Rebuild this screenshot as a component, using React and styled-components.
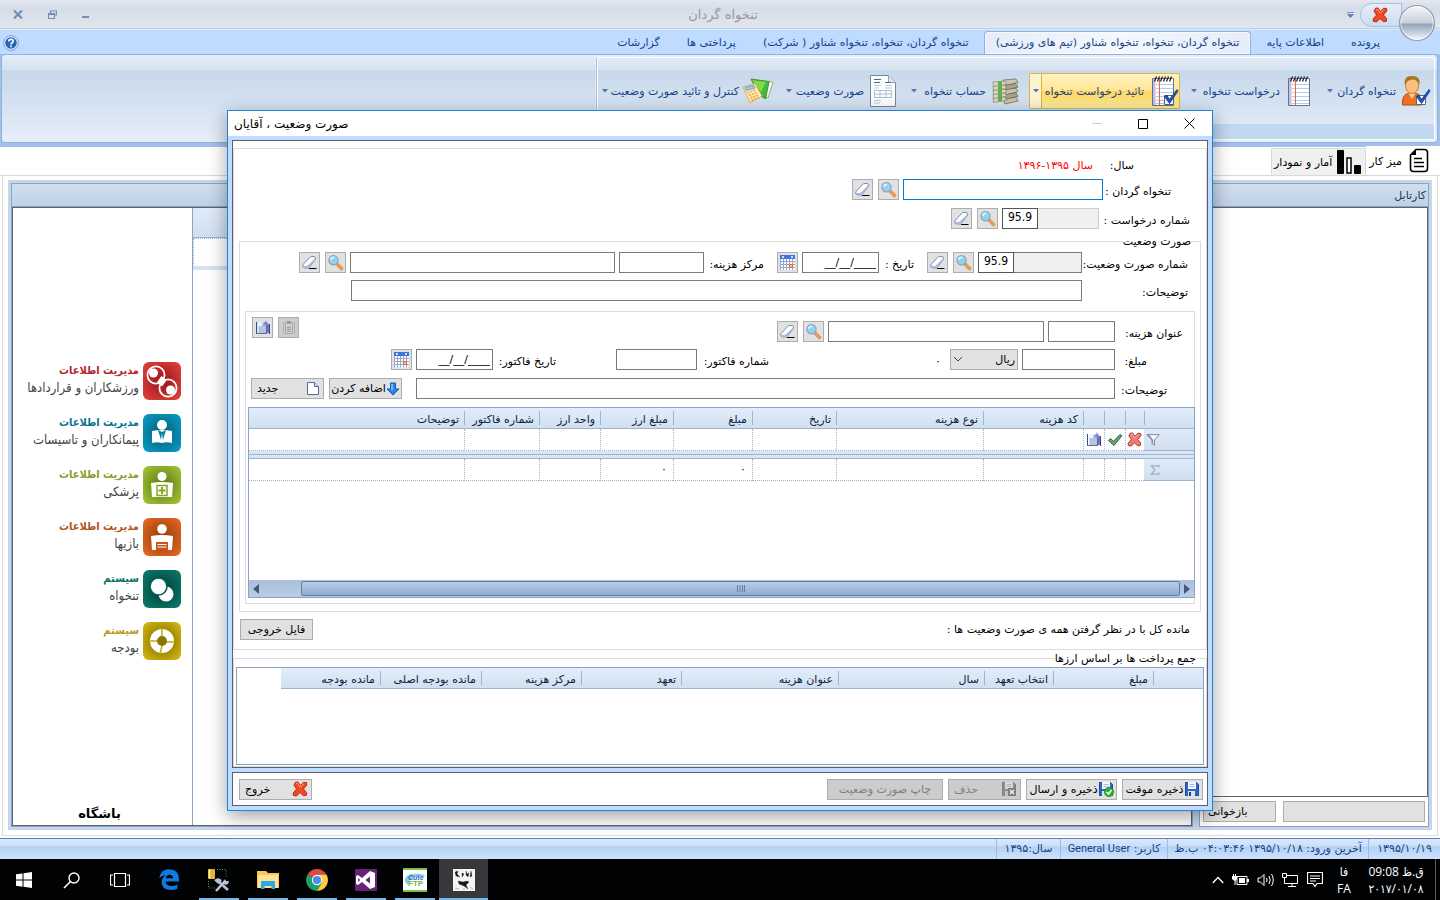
import React from "react";
import styled, { createGlobalStyle, css } from "styled-components";

const Global = createGlobalStyle`
  * { box-sizing: border-box; }
  html, body, #root { height: 100%; }
  body { margin: 0; overflow: hidden; background: #fff; }
  body, button, input, select { font-family: "DejaVu Sans", sans-serif; font-size: 11px; color: #000; }
  button { cursor: default; white-space: nowrap; }
  svg { display: block; flex: none; }
  a { text-decoration: none; color: inherit; }
`;

/* ---------- icons ---------- */

const RedX = ({ size = 16, fill = "#f04a24", stroke = "#b92c10" }) => (
  <svg width={size} height={size} viewBox="0 0 16 16">
    <path d="M3.5 1.2 6 1 8.4 4.6 11.6 1.2 14.6 1.6 14.8 4 11.4 8 14.6 11.6 14.4 14.2 11.4 14.8 8 11.4 4.6 15 1.4 14.4 1.2 12 4.6 8 2 4.2Z" fill={fill} stroke={stroke} strokeLinejoin="round" />
    <path d="M4 2.6 5.6 2.4 8 6 12 2.8" fill="none" stroke="#fff" strokeOpacity=".45" />
  </svg>
);

const MagnifierIcon = () => (
  <svg width="17" height="17" viewBox="0 0 17 17">
    <path d="m10 10 4.500 4.500" stroke="#a8a29a" strokeWidth="3.600" strokeLinecap="round" />
    <path d="m11 11 3.500 3.500" stroke="#f79a3c" strokeWidth="2.600" strokeLinecap="round" />
    <circle cx="6.500" cy="6.200" r="4.600" fill="#8fd3f4" stroke="#8fa3b3" strokeWidth="1.200" />
    <path d="M3.8 5.8a2.8 2.8 0 0 1 3.4-2.4" stroke="#e8f9ff" strokeWidth="1.600" fill="none" />
  </svg>
);

const EraserIcon = () => (
  <svg width="17" height="17" viewBox="0 0 17 17">
    <path d="M1.600 11 8.500 3.600Q9.500 2.500 11 2.500h2q2 .4 1.600 2.300l-.4.9L8.600 13q-.8 1-2 1H4q-2.600-.2-2.400-3Z" fill="#fbfdff" stroke="#7a8cb0" />
    <path d="M2.200 11.400q1.600 1 3.600.6l1.200-.8L14 4.500l.2 1.200L8.600 13q-.8 1-2 1H4q-1.800-.4-1.800-2.600Z" fill="#a8bbdc" />
    <path d="M8 14.500h7.500" stroke="#000" />
  </svg>
);

const CalendarIcon = () => (
  <svg width="17" height="17" viewBox="0 0 17 17" shapeRendering="crispEdges">
    <path d="M1 5h15v11H1z" fill="#fff" />
    <path d="M1 1h15v4H1z" fill="#3f73e0" />
    <path d="M3 2h2v2H3zM12 2h2v2h-2z" fill="#cfe0ff" />
    <path d="M1.5 5v11M4.5 5v11M7.5 5v11M10.5 5v11M13.5 5v11M1 7.500h15M1 10.500h15M1 13.500h15" stroke="#8fa9cf" />
    <path d="M10 10h4v4h-4z" fill="#e8683a" />
    <path d="M11 11h2v2h-2z" fill="#ffb58e" />
  </svg>
);

const CopyIcon = () => (
  <svg width="17" height="17" viewBox="0 0 17 17">
    <path d="M10 3.500h3l2 2.500v8h-5z" fill="#7d6bc4" />
    <path d="M11.500 1v5h3.500" fill="#9a7bdc" />
    <path d="M4 3.500h4.500L12 7v7H4z" fill="#f0f4fb" />
    <path d="M4.500 7H12v7H4.500z" fill="#b4c3e2" />
    <path d="M2.500 3v12M15.500 5v10" stroke="#30508c" fill="none" />
    <path d="M2 14.500h10M12.500 7v8" stroke="#5a6ba0" fill="none" />
    <path d="M8.500 3v4H12z" fill="#7db4dc" />
  </svg>
);

const PasteIcon = () => (
  <svg width="17" height="17" viewBox="0 0 17 17">
    <path d="M3.500 3v12M14.500 3v12" stroke="#b2b2b2" />
    <path d="M5.500 3.500h7v11h-7z" fill="#d4d4d4" stroke="#a5a5a5" />
    <path d="M7 2h4v3H7z" fill="#999" />
    <path d="M7 7h4v6H7z" fill="#bfbfbf" />
    <path d="M7 8.500h4M7 10.500h4M7 12.500h3" stroke="#a3a3a3" />
  </svg>
);

const DownArrowIcon = () => (
  <svg width="14" height="14" viewBox="0 0 14 14">
    <path d="M4.500 1h5v6H13L7 13 1 7h3.500z" fill="#2a86ea" stroke="#1559b0" strokeLinejoin="round" />
    <path d="M6 2v6" stroke="#8cc8ff" strokeWidth="1.500" />
  </svg>
);

const PageIcon = () => (
  <svg width="14" height="15" viewBox="0 0 14 15">
    <path d="M1.500 1.500h7l4 4v8h-11z" fill="#fff" stroke="#4a6c9e" />
    <path d="M8.500 1.500v4h4" fill="#d4e2f5" stroke="#4a6c9e" />
  </svg>
);

const SaveIcon = ({ badge, grey }) => (
  <svg width="16" height="16" viewBox="0 0 16 16">
    <path d="M1.500 1.500h11l2 2v11h-13z" fill={grey ? "#8d8d8d" : "#2f66c0"} stroke={grey ? "#7b7b7b" : "#1c4a9a"} />
    <path d="M4 1h8v7H4z" fill={grey ? "#d9d9d9" : "#f4f8ff"} />
    <path d="M5.500 3.500h5M5.500 5.500h5" stroke={grey ? "#b5b5b5" : "#a9bddf"} />
    <path d="M4 10h7v5H4z" fill={grey ? "#c2c2c2" : "#dde5f2"} />
    {!badge && <path d="M5 11h2v4H5z" fill="#1c418a" />}
    {badge === "ok" && (
      <g><circle cx="11" cy="11" r="4.700" fill="#2fae35" stroke="#16801f" strokeWidth=".6" /><path d="m8.500 11 2 2 3-4" stroke="#fff" strokeWidth="1.600" fill="none" /></g>
    )}
    {badge === "x" && (
      <g><path d="M7 7h8v8H7z" fill="#7d7d7d" /><path d="m9 9 4 4M13 9l-4 4" stroke="#eee" strokeWidth="1.600" /></g>
    )}
  </svg>
);

const CheckIcon = () => (
  <svg width="16" height="16" viewBox="0 0 16 16">
    <path d="m1.500 8.500 2-2 3 2.800L13 2.500l1.800 1.300L7 13.500Z" fill="#6aa869" stroke="#2f5f3a" strokeLinejoin="round" />
  </svg>
);

const FunnelIcon = () => (
  <svg width="14" height="12" viewBox="0 0 14 12">
    <path d="M.8.6h12.400L8.500 6v5.400l-2.600-2V6Z" fill="#f4f7fb" stroke="#8792a3" strokeLinejoin="round" />
    <path d="M1 .6 6 6v3l1.200 1V6L3 .6Z" fill="#7f8998" />
  </svg>
);

const SigmaIcon = () => (
  <svg width="10" height="10" viewBox="0 0 10 10">
    <path d="M9 2.500V.8H1L5 5 1 9.200h8V7.500" fill="none" stroke="#9dacc2" strokeWidth="1.200" />
  </svg>
);

const blueCheck = (
  <g>
    <path d="M17.500 20.500h9v9h-9z" fill="#fff" stroke="#5d6675" />
    <path d="m17.500 21.500 2.500-1 2.500 4 7.500-10 1 1.500-8.500 12.500Z" fill="#1b55c4" stroke="#0c3290" strokeWidth=".8" strokeLinejoin="round" />
  </g>
);

const UserCheckIcon = () => (
  <svg width="32" height="32" viewBox="0 0 32 32">
    <path d="M3.500 30q-1-11 7-12h5q7 1 7 6v6z" fill="#ea7424" stroke="#b44c0c" />
    <path d="m9.500 18 3.500 6 3.500-6z" fill="#ffd3a0" />
    <ellipse cx="13" cy="10.500" rx="6.500" ry="8" fill="#f9c07e" stroke="#c07e2c" />
    <path d="M6 10.500Q4 1 13 1t7.500 9q-1.500-5.500-7-5.500T6 10.500Z" fill="#a8761a" />
    {blueCheck}
  </svg>
);

const Notepad = ({ check }) => (
  <svg width="32" height="32" viewBox="0 0 32 32">
    <path d="M5.500 3.500h21v27h-21z" fill="#fff" stroke="#6a6f92" />
    <path d="M6 4h2.500v26H6z" fill="#c3c3e0" />
    <path d="M9 9.500h17M9 13.500h17M9 17.500h17M9 21.500h17M9 25.500h17M9 28.500h17" stroke="#b4caf0" />
    <path d="M12.500 4v26" stroke="#f0603f" />
    <path d="m7.500 6.500 2-5M10.500 6.500l2-5M13.500 6.500l2-5M16.500 6.500l2-5M19.500 6.500l2-5M22.500 6.500l2-5" stroke="#26262c" strokeWidth="1.300" />
    {check && blueCheck}
  </svg>
);

const MoneyIcon = () => (
  <svg width="32" height="32" viewBox="0 0 32 32">
    {[4, 3, 2, 1, 0].map((i) => (
      <path key={i} d={`M14 ${5 + i * 4.600} 27 ${4 + i * 4.600}l2 3.600-13 3z`} fill={i % 2 ? "#a8a38a" : "#c9c4ab"} stroke="#55523f" strokeWidth=".6" />
    ))}
    {[4, 3, 2, 1, 0].map((i) => (
      <g key={i}>
        <path d={`M4 ${7 + i * 4} 16 ${6 + i * 4}l1.500 3.400-13 2z`} fill="#d9d7c4" stroke="#77755f" strokeWidth=".6" />
        <path d={`m9 ${6.600 + i * 4} 4-.4v4l-4 .6z`} fill="#5cb445" />
      </g>
    ))}
  </svg>
);

const FormIcon = () => (
  <svg width="32" height="32" viewBox="0 0 32 32">
    <path d="M3.500 .5h18l7 7v24h-25z" fill="#fdfeff" stroke="#71889f" />
    <path d="M21.500 .5v7h7" fill="#dfe9f3" stroke="#8fa5ba" />
    <path d="M7 4.500h7M7 7.500h6M18 7.500h6" stroke="#59636d" />
    <path d="M7 10.500h7M18 10.500h7M7 13h5M18 13h7M7 25.500h7M7 28h6" stroke="#b7c8d8" />
    <path d="M7.500 15.500h17v7h-17zM7.500 19h17M13 15.500v7M19 15.500v7" fill="none" stroke="#a9c0d6" />
  </svg>
);

const BookCalcIcon = () => (
  <svg width="32" height="32" viewBox="0 0 32 32">
    <path d="m27 6 4 1.500L26 23l-2.500-1z" fill="#f3f6ea" stroke="#7aa85a" strokeWidth=".8" />
    <path d="m9 4 18 2.500L23.500 24 17 20z" fill="#46b83c" stroke="#2a8a2a" strokeWidth=".8" />
    <path d="m10 5 14 2-5 10z" fill="#8fe04d" opacity=".8" />
    <path d="m1 12 12-3.500L20 21 8 28z" fill="#ffe9b4" stroke="#d9a44a" strokeWidth=".8" />
    <path d="m3 12.500 8.500-2.500 1.500 3-9 2.500z" fill="#8ccbef" stroke="#5a93bf" strokeWidth=".7" />
    <path d="m5.500 18 8-3.200M7 20.500l8-3.200M8.500 23l8-3.200M9.500 25.500l8-3.400" stroke="#eba945" strokeWidth="1.500" strokeDasharray="2 1" />
  </svg>
);

const DocumentLinesIcon = () => (
  <svg width="20" height="26" viewBox="0 0 20 26">
    <path d="M7 1.500h8.500a3 3 0 0 1 3 3v16a3 3 0 0 1-3 3h-11a3 3 0 0 1-3-3V7z" fill="#fff" stroke="#000" strokeWidth="1.600" />
    <path d="M7 1.500V7H1.500z" fill="#000" />
    <path d="M5 10.500h8M5 14.500h10M5 18.500h10" stroke="#000" strokeWidth="1.400" />
  </svg>
);

const BarsIcon = () => (
  <svg width="26" height="26" viewBox="0 0 26 26">
    <rect x="1" y="1" width="7" height="24" rx="1" />
    <rect x="11" y="9" width="4" height="15" fill="#fff" stroke="#000" strokeWidth="1.500" />
    <rect x="18" y="16" width="7" height="9" rx="1" />
  </svg>
);

const HelpIcon = () => (
  <svg width="16" height="16" viewBox="0 0 16 16">
    <circle cx="8" cy="8" r="7.400" fill="#dcebfb" stroke="#7fa0cc" />
    <circle cx="8" cy="8" r="5.800" fill="#2566b8" />
    <path d="M5.800 6.400q0-2 2.200-2t2.200 1.800q0 1-1.200 1.600Q8 8.400 8 9.400M8 10.600v1.600" stroke="#fff" strokeWidth="1.600" fill="none" />
  </svg>
);

const OrbIcon = () => (
  <svg width="38" height="38" viewBox="0 0 38 38">
    <defs>
      <linearGradient id="orb" x2="0" y2="1">
        <stop offset="0" stopColor="#f4f6f9" /><stop offset=".5" stopColor="#c9cfda" />
        <stop offset=".53" stopColor="#93a1b8" /><stop offset="1" stopColor="#f6faff" />
      </linearGradient>
    </defs>
    <circle cx="19" cy="19" r="17.500" fill="url(#orb)" stroke="#8e9db5" strokeWidth="1.200" />
    <circle cx="19" cy="19" r="16.300" fill="none" stroke="#fff" strokeOpacity=".6" />
  </svg>
);

const moduleArt = {
  ball: (
    <g fill="#fff">
      <circle cx="10.500" cy="11" r="4.500" /><circle cx="27.500" cy="28" r="4.500" />
      <path d="m18.500 14 5 4.500-4.500 6-5-4.500z" />
      <circle cx="13" cy="13" r="8.600" fill="none" stroke="#fff" strokeWidth="1.800" />
      <circle cx="25" cy="26" r="8.600" fill="none" stroke="#fff" strokeWidth="1.800" />
    </g>
  ),
  tie: (
    <g fill="#fff">
      <circle cx="19" cy="11" r="5" /><path d="M9 17q10-2 20 0l0 12q-5-1.500-10 0-5-1.500-10 0z" />
      <path d="m15 16 3 10 1-7 1 7 3-10-4 2z" fill="#0a7fa3" />
    </g>
  ),
  medic: (
    <g fill="#fff">
      <circle cx="19" cy="10.500" r="4.600" /><path d="M8 17q11-2 22 0l-1 14H9z" />
      <path d="M14 19.500h10v10H14z" fill="none" stroke="#86a61f" strokeWidth="1.500" /><path d="M19 21v7M15.500 24.500h7" stroke="#86a61f" strokeWidth="2" />
    </g>
  ),
  desk: (
    <g fill="#fff">
      <circle cx="19" cy="11" r="4.800" /><path d="M8 18q11-2 22 0l-1 14H9z" />
      <path d="M13 24h12v8H13z" fill="#c85518" /><path d="M14.500 26.500h9M14.500 29h9" stroke="#fff" strokeWidth="1.200" />
    </g>
  ),
  coins: (
    <g fill="#fff"><circle cx="23" cy="24" r="7.500" /><circle cx="15.500" cy="16.500" r="8.500" stroke="#066153" strokeWidth="1.600" /></g>
  ),
  ring: (
    <g>
      <circle cx="19" cy="19" r="8.500" fill="none" stroke="#fff" strokeWidth="7" />
      <path d="M19 6v8M6 19h8M24 20h8M19 24l-2 8" stroke="#c5a90f" strokeWidth="1.500" />
    </g>
  ),
};

const ModuleIcon = ({ kind, from, to }) => (
  <svg width="38" height="38" viewBox="0 0 38 38">
    <defs>
      <radialGradient id={`g-${kind}`} cx=".5" cy=".5" r=".72">
        <stop offset=".2" stopColor={from} /><stop offset="1" stopColor={to} />
      </radialGradient>
    </defs>
    <rect width="38" height="38" rx="6" fill={`url(#g-${kind})`} />
    {moduleArt[kind]}
  </svg>
);

/* ---------- host window ---------- */

const Screen = styled.div`
  position: relative;
  height: 100vh;
  min-width: 1200px;
  display: flex;
  flex-direction: column;
  direction: rtl;
  white-space: nowrap;
`;

const TitleBar = styled.header`
  position: relative;
  height: 30px;
  flex: none;
  display: flex;
  align-items: center;
  background: linear-gradient(#e2e7f0 0, #d6dde8 30%, #e2e6ee 100%);
  border-bottom: 1px solid #dfeaf8;
  box-shadow: inset 0 -1px #bccfe8;
  padding: 0 38px 0 6px;
`;

const AppTitle = styled.h1`
  flex: 1;
  margin: 0;
  padding-left: 10px;
  font-size: 13px;
  font-weight: normal;
  text-align: center;
  color: #9a9a9a;
`;

const Orb = styled.button`
  position: absolute;
  top: 4px;
  right: 4px;
  padding: 0;
  border: 0;
  background: none;
`;

const QuickAccess = styled.div`
  width: 42px;
  height: 24px;
  display: flex;
  align-items: center;
  padding-right: 13px;
  border: 1px solid #a9bfdd;
  border-radius: 12px 0 0 12px;
  background: linear-gradient(#e6edf7, #cddcf0);
`;

const PlainButton = styled.button`
  display: grid;
  place-items: center;
  width: ${(p) => p.$w || 34}px;
  height: 22px;
  padding: 0;
  border: 0;
  background: none;
`;

const WindowControls = styled.div`
  display: flex;
  direction: ltr;
`;

const TabStrip = styled.nav`
  height: 24px;
  flex: none;
  display: flex;
  align-items: flex-end;
  gap: 3px;
  padding: 0 48px 0 3px;
  background: #bfdbff;
`;

const RibbonTab = styled.a`
  height: 23px;
  line-height: 22px;
  padding: 0 11px;
  color: #15428b;
  border: 1px solid transparent;
  border-bottom: 0;
  ${(p) => p.$active && css`
    border-color: #8db2e3;
    border-radius: 4px 4px 0 0;
    background: linear-gradient(90deg, #e6edf8, #f4f8fd 50%, #e6edf8);
    box-shadow: inset 0 0 0 1px #fff8;
  `}
`;

const HelpButton = styled(PlainButton)`
  margin-right: auto;
`;

const Ribbon = styled.div`
  height: 93px;
  flex: none;
  padding: 0 2px 4px 1px;
  background: #a3c0e8;
`;

const RibbonBody = styled.div`
  height: 100%;
  display: flex;
  padding: 2px;
  border: 1px solid #8db2e3;
  border-radius: 4px;
  background: linear-gradient(#e6eef8 0, #d5e2f0 17%, #c7d8ea 18%, #d7e3f2 60%, #e7eff9 100%);
`;

const RibbonGroup = styled.div`
  display: flex;
  flex-direction: column;
  border: 1px solid #fff;
  border-left-color: #a9bfdd;
  border-radius: 3px;
  box-shadow: inset 1px 0 #fff, -1px 0 #fff4;
`;

const RibbonItems = styled.div`
  flex: 1;
  display: flex;
  align-items: center;
  gap: 7px;
  padding: 0 2px;
`;

const GroupCaption = styled.div`
  height: 15px;
  background: #c1d8f0;
`;

const RibbonItem = styled.div`
  width: ${(p) => p.$w}px;
  height: 36px;
  display: flex;
  border: 1px solid transparent;
  border-radius: 2px;
  ${(p) => p.$active && css`
    border-color: #d9b54c;
    background: linear-gradient(#fff3c4 0, #ffe694 48%, #ffd55a 52%, #fff0a0 100%);
  `}
`;

const RibbonMain = styled.button`
  flex: 1;
  display: flex;
  align-items: center;
  gap: 3px;
  padding: 0;
  border: 0;
  background: none;
  color: #15428b;
`;

const RibbonDrop = styled.button`
  width: 12px;
  padding: 0;
  border: 0;
  display: grid;
  place-items: center;
  background: ${(p) => (p.$active ? "#fff3cf" : "none")};
  border-right: 1px solid ${(p) => (p.$active ? "#d9b54c" : "transparent")};
`;

const Caret = () => (
  <svg width="6" height="4" viewBox="0 0 6 4"><path d="M0 0h6L3 3.500z" fill="#4a77b8" /></svg>
);

const PageTabs = styled.nav`
  height: 29px;
  flex: none;
  display: flex;
  align-items: flex-end;
  border-bottom: 1px solid #d9d9d9;
`;

const PageTab = styled.a`
  height: ${(p) => (p.$active ? 29 : 27)}px;
  display: flex;
  align-items: center;
  gap: ${(p) => (p.$active ? 7 : 4)}px;
  padding: 0 ${(p) => (p.$active ? 10 : 3)}px 0 2px;
  background: ${(p) => (p.$active ? "#fff" : "#f0f0f0")};
  border: 1px solid ${(p) => (p.$active ? "transparent" : "#d9d9d9")};
  border-bottom: 0;
`;

const Workspace = styled.main`
  flex: 1;
  min-height: 0;
  display: grid;
  grid-template-columns: 236px 1fr;
  padding: 4px 5px 5px;
  margin: 0 2px 2px;
  border: 1px solid #dcdcdc;
  border-top: 0;
`;

const Pane = styled.section`
  min-height: 0;
  display: flex;
  flex-direction: column;
  border: 3px solid #c6d6ea;
  outline: 1px solid #8aa4c8;
  outline-offset: -4px;
  padding: 1px;
`;

const PaneHeader = styled.h2`
  height: 23px;
  flex: none;
  margin: 0;
  padding: 0 2px;
  font-size: 11px;
  font-weight: normal;
  line-height: 23px;
  color: #1e3250;
  background: linear-gradient(#d0dfee, #bfd1e6);
  border-bottom: 1px solid #8aa4c8;
`;

const PaneBody = styled.div`
  flex: 1;
  min-height: 0;
  display: flex;
  border: 1px solid #5d6270;
  direction: ltr;
`;

const PaneFooter = styled.div`
  height: 29px;
  flex: none;
  display: flex;
  align-items: center;
  gap: 7px;
  padding: 0 3px;
`;

const ModuleList = styled.ul`
  width: 180px;
  margin: 0;
  padding: 154px 11px 4px;
  list-style: none;
  display: flex;
  flex-direction: column;
  gap: 14px;
  direction: rtl;
  border-right: 1px solid #8aa4c8;
`;

const ModuleLink = styled.a`
  height: 38px;
  display: flex;
  gap: 4px;
  font-family: "DejaVu Sans Condensed", "DejaVu Sans", sans-serif;
  font-size: 13px;
  line-height: 17px;
  color: #444;
`;

const ModuleTitle = styled.strong`
  display: block;
  font-size: 11px;
  color: ${(p) => p.$color};
`;

const ClubName = styled.li`
  margin-top: auto;
  padding-right: 6px;
  text-align: center;
  font-size: 13px;
  font-weight: bold;
`;

const BackGrid = styled.div`
  flex: 1;
`;

const BackGridHead = styled.div`
  height: 30px;
  background: linear-gradient(#e0ebf8, #cfdff0);
  border-bottom: 1px solid #9fb4d0;
`;

const BackGridRow = styled.div`
  height: 32px;
  border: 1px dotted #9fb4d0;
  border-bottom: 4px solid #d5e3f3;
`;

const StatusBar = styled.footer`
  height: 21px;
  flex: none;
  display: flex;
  line-height: 20px;
  color: #15428b;
  border-top: 1px solid #5b83bb;
  background: linear-gradient(#dbe8f9 0, #cbdff8 35%, #b3d0f5 40%, #cfe2fa 100%);
`;

const StatusCell = styled.div`
  width: ${(p) => p.$w}px;
  text-align: center;
  border-left: 1px solid #9fbce4;
`;

const LatinName = styled.bdi`
  font-family: Roboto, sans-serif;
`;

/* ---------- taskbar ---------- */

const Taskbar = styled.div`
  height: 41px;
  flex: none;
  display: flex;
  direction: ltr;
  background: #010204;
  color: #fff;
`;

const TaskButton = styled.button`
  width: ${(p) => p.$w || 49}px;
  height: 41px;
  display: grid;
  place-items: center;
  border: 0;
  padding: 0;
  background: ${(p) => (p.$active ? "#37383c" : "none")};
  background-image: ${(p) => (p.$running ? "linear-gradient(#76b9ed, #76b9ed)" : "none")};
  background-size: ${(p) => (p.$active ? "100%" : "40px")} 2px;
  background-position: bottom center;
  background-repeat: no-repeat;
`;

const Tray = styled.div`
  margin-left: auto;
  display: flex;
  align-items: center;
  gap: 8px;
`;

const TrayText = styled.div`
  width: ${(p) => p.$w}px;
  text-align: center;
  direction: rtl;
  font-family: "Open Sans", "DejaVu Sans Condensed", sans-serif;
  font-size: 12px;
  line-height: 17px;
`;

const ShowDesktop = styled.div`
  width: 5px;
  align-self: stretch;
  border-left: 1px solid #5a5a5a;
`;

/* ---------- dialog ---------- */

const Dialog = styled.div`
  position: absolute;
  top: 110px;
  bottom: 89px;
  left: 227px;
  right: 227px;
  display: flex;
  flex-direction: column;
  background: #bfdbff;
  border: 1px solid #1e84dc;
  box-shadow: 0 5px 18px rgba(0, 0, 0, 0.38);
`;

const DialogTitle = styled.header`
  height: 25px;
  flex: none;
  display: flex;
  align-items: center;
  justify-content: space-between;
  padding: 0 0 0 6px;
  background: #fff;
  font-size: 12px;
`;

const DialogControls = styled.div`
  display: flex;
`;

const DialogBody = styled.form`
  flex: 1;
  min-height: 0;
  margin: 0;
  padding: 4px;
  display: flex;
  flex-direction: column;
  gap: 4px;
`;

const Panel = styled.div`
  display: flex;
  flex-direction: column;
  flex: ${(p) => (p.$grow ? 1 : "none")};
  min-height: 0;
  padding-top: ${(p) => (p.$grow ? 7 : 0)}px;
  background: #fff;
  border: 1px solid #5f5f6b;
`;

const Group = styled.div`
  display: flex;
  flex-direction: column;
  flex: 1;
  min-height: 0;
  border: 1px solid #dcdcdc;
  margin: ${(p) => p.$margin || "0"};
  padding: ${(p) => p.$pad || "0"};
`;

const FieldSet = styled.fieldset`
  display: flex;
  flex-direction: column;
  flex: ${(p) => (p.$h ? "none" : 1)};
  height: ${(p) => (p.$h ? p.$h + "px" : "auto")};
  min-width: 0;
  min-height: 0;
  margin: ${(p) => p.$margin || "0"};
  padding: ${(p) => p.$pad || "0"};
  border: 1px solid #dcdcdc;
`;

const Legend = styled.legend`
  height: 16px;
  line-height: 18px;
  margin-right: ${(p) => p.$inset}px;
  padding: 0;
`;

const Row = styled.div`
  min-height: 21px;
  flex: none;
  display: flex;
  align-items: flex-end;
  gap: 4px;
  padding: 0 ${(p) => p.$start || 0}px 0 ${(p) => p.$end || 0}px;
  margin-bottom: ${(p) => p.$after || 0}px;
`;

const Label = styled.label`
  width: ${(p) => p.$w}px;
  line-height: 17px;
  padding-right: ${(p) => p.$indent || 0}px;
  margin-right: ${(p) => p.$lead || 0}px;
`;

const YearValue = styled.output`
  line-height: 17px;
  color: #f00;
`;

const TextBox = styled.input`
  width: ${(p) => (p.$w ? p.$w + "px" : "auto")};
  flex: ${(p) => (p.$w ? "none" : 1)};
  min-width: 0;
  height: 21px;
  padding: 0 2px;
  border: 1px solid #7a7a7a;
  background: #fff;
  outline: 0;
  &:focus { border-color: #0078d7; }
`;

const DateBox = styled(TextBox)`
  direction: ltr;
  text-align: right;
`;

const NumberPair = styled.div`
  width: ${(p) => p.$w}px;
  height: 21px;
  display: flex;
  border: 1px solid ${(p) => (p.$soft ? "#ccc" : "#7a7a7a")};
  background: #f0f0f0;
`;

const NumberPart = styled.input`
  width: ${(p) => (p.$narrow ? "36px" : "auto")};
  flex: ${(p) => (p.$narrow ? "none" : 1)};
  min-width: 0;
  height: 21px;
  margin: -1px 0 -1px ${(p) => (p.$narrow ? -1 : 0)}px;
  padding: 0 0 3px;
  border: ${(p) => (p.$narrow ? "1px solid #555" : "0")};
  background: ${(p) => (p.$narrow ? "#fff" : "transparent")};
  text-align: center;
  font-family: "DejaVu Sans Condensed", sans-serif;
  font-size: 12px;
`;

const Buttons = styled.div`
  display: flex;
  gap: 5px;
`;

const TallTools = styled(Buttons)`
  height: 25px;
  align-items: flex-start;
  margin-right: auto;
`;

const AddButtons = styled(Buttons)`
  margin-right: 10px;
`;

const IconButton = styled.button`
  width: 21px;
  height: 21px;
  display: grid;
  place-items: center;
  padding: 0;
  border: 1px solid #adadad;
  background: ${(p) => (p.disabled ? "#ccc" : "#e1e1e1")};
`;

const PushButton = styled.button`
  width: ${(p) => p.$w}px;
  height: 21px;
  display: flex;
  align-items: center;
  justify-content: ${(p) => (p.$split ? "space-between" : "center")};
  padding: ${(p) => (p.$split ? "0 3px 0 5px" : "0 2px")};
  border: 1px solid #adadad;
  background: ${(p) => (p.disabled ? "#ccc" : "#e1e1e1")};
  color: ${(p) => (p.disabled ? "#808080" : "#000")};
  margin-right: ${(p) => (p.$push ? "auto" : 0)};
`;

const RefreshButton = styled(PushButton)`
  justify-content: flex-end;
  padding-left: 4px;
`;

const Currency = styled.select`
  width: 68px;
  height: 21px;
  padding: 0 2px;
  appearance: none;
  border: 1px solid #adadad;
  background: #e1e1e1 url("data:image/svg+xml,%3Csvg xmlns='http://www.w3.org/2000/svg' width='8' height='5'%3E%3Cpath d='M0 0l4 4 4-4' fill='none' stroke='%23444'/%3E%3C/svg%3E") no-repeat 3px center;
`;

const Amount = styled.output`
  flex: 1;
  padding-right: 5px;
  line-height: 17px;
`;

const GridFrame = styled.div`
  flex: 1;
  min-height: 0;
  display: flex;
  flex-direction: column;
  border: 1px solid #8aa4c8;
  margin: ${(p) => p.$margin || "0"};
`;

const DataTable = styled.table`
  width: 100%;
  table-layout: fixed;
  border-collapse: separate;
  border-spacing: 0;
`;

const HeadCell = styled.th`
  height: 21px;
  padding: 3px 5px 0 0;
  font-weight: normal;
  text-align: right;
  line-height: 17px;
  color: #10203c;
  overflow: hidden;
  border-bottom: 1px solid #9fb4d0;
  background:
    linear-gradient(#9fb4d0, #9fb4d0) no-repeat left 3px / 1px 14px,
    linear-gradient(#e3edf9, #d0e0f0);
  ${(p) => p.$last && css`background: linear-gradient(#e3edf9, #d0e0f0);`}
`;

const BlankHead = styled.th`
  padding: 0;
`;

const Cell = styled.td`
  height: 22px;
  padding: 0 6px 0 0;
  line-height: 20px;
  border-bottom: 1px dotted #9fb4d0;
  border-left: 1px dotted #9fb4d0;
  &:last-child { border-left: 0; }
`;

const IconCell = styled(Cell)`
  padding: 0 2px;
`;

const SelectorCell = styled.th`
  padding: 0 34px 0 0;
  background: linear-gradient(#e0ebf8, #cfdff0);
  border-bottom: 1px solid #9fb4d0;
`;

const Splitter = styled.td`
  height: 8px;
  padding: 0;
  border-bottom: 1px solid #9fb4d0;
  background: linear-gradient(#d9e6f4 3px, #9fb4d0 3px, #9fb4d0 4px, #d9e6f4 4px);
`;

const Scrollbar = styled.div`
  height: 17px;
  margin-top: auto;
  display: flex;
  align-items: center;
  padding: 0 4px;
  background: linear-gradient(#a9bfdc, #bccde5);
`;

const ScrollThumb = styled.div`
  flex: 1;
  height: 15px;
  margin: 0 4px 0 42px;
  display: grid;
  place-items: center;
  border: 1px solid #5f7ea6;
  border-radius: 2px;
  background: linear-gradient(#b9cce4, #92acd0);
`;

const SummaryRow = styled.div`
  height: 37px;
  flex: none;
  display: flex;
  align-items: center;
  padding: 0 16px 2px 6px;
`;

const CommandBar = styled.div`
  height: 32px;
  display: flex;
  align-items: center;
  gap: 5px;
  padding: 0 4px 0 6px;
`;

const LookupButtons = () => (
  <Buttons>
    <IconButton type="button" aria-label="جستجو"><MagnifierIcon /></IconButton>
    <IconButton type="button" aria-label="پاک کردن"><EraserIcon /></IconButton>
  </Buttons>
);

const DateField = ({ id }) => (
  <>
    <DateBox id={id} $w={77} defaultValue="__/__/____" />
    <IconButton type="button" aria-label="تقویم"><CalendarIcon /></IconButton>
  </>
);

const ribbonTabs = [
  "پرونده",
  "اطلاعات پایه",
  "تنخواه گردان، تنخواه، تنخواه شناور  (تیم های ورزشی)",
  "تنخواه گردان، تنخواه، تنخواه شناور ( شرکت)",
  "پرداختی ها",
  "گزارشات",
];

const ribbonItems = [
  { text: "تنخواه گردان", w: 109, icon: <UserCheckIcon /> },
  { text: "درخواست تنخواه", w: 129, icon: <Notepad /> },
  { text: "تائید درخواست تنخواه", w: 151, icon: <Notepad check />, active: true },
  { text: "حساب تنخواه", w: 115, icon: <MoneyIcon /> },
  { text: "صورت وضعیت", w: 118, icon: <FormIcon /> },
  { text: "کنترل و تائید صورت وضعیت", w: 176, icon: <BookCalcIcon /> },
];

const modules = [
  { title: "مدیریت اطلاعات", sub: "ورزشکاران و قراردادها", color: "#b5262a", kind: "ball", from: "#a51d20", to: "#e8463f" },
  { title: "مدیریت اطلاعات", sub: "پیمانکاران و تاسیسات", color: "#0a7590", kind: "tie", from: "#056a86", to: "#0ba0cc" },
  { title: "مدیریت اطلاعات", sub: "پزشکی", color: "#86a02c", kind: "medic", from: "#6b8519", to: "#a8cc3a" },
  { title: "مدیریت اطلاعات", sub: "بازیها", color: "#b5541c", kind: "desk", from: "#a34410", to: "#ee6c24" },
  { title: "سیستم", sub: "تنخواه", color: "#0a7564", kind: "coins", from: "#04493f", to: "#0a8070" },
  { title: "سیستم", sub: "بودجه", color: "#b5a022", kind: "ring", from: "#8a7600", to: "#dcc014" },
];

const costColumns = [
  [50, ""], [19, ""], [21, ""], [21, ""], [100, "کد هزینه"], [147, "نوع هزینه"], [84, "تاریخ"],
  [79, "مبلغ"], [73, "مبلغ ارز"], [61, "واحد ارز"], [75, "شماره فاکتور"], [0, "توضیحات"],
];

const paymentColumns = [
  [50, ""], [100, "مبلغ"], [69, "انتخاب تعهد"], [146, "سال"], [157, "عنوان هزینه"], [100, "تعهد"],
  [100, "مرکز هزینه"], [101, "مانده بودجه اصلی"], [99, "مانده بودجه"],
];

const Columns = ({ list, spare }) => (
  <colgroup>
    {list.map(([w], i) => <col key={i} width={w || undefined} />)}
    {spare && <col />}
  </colgroup>
);

const CostTable = () => (
  <GridFrame $margin="8px -1px 5px 2px">
    <DataTable>
      <Columns list={costColumns} />
      <thead>
        <tr>{costColumns.map(([, t], i) => <HeadCell key={i} $last={i === costColumns.length - 1}>{t}</HeadCell>)}</tr>
      </thead>
      <tbody>
        <tr>
          <SelectorCell><FunnelIcon /></SelectorCell>
          <IconCell><RedX fill="#f47a6e" stroke="#a33" size={15} /></IconCell>
          <IconCell><CheckIcon /></IconCell>
          <IconCell><CopyIcon /></IconCell>
          {costColumns.slice(4).map((c) => <Cell key={c[1]} />)}
        </tr>
        <tr><Splitter colSpan={12} /></tr>
        <tr>
          <SelectorCell><SigmaIcon /></SelectorCell>
          {costColumns.slice(1).map(([, t], i) => (
            <Cell key={i}>{t === "مبلغ" || t === "مبلغ ارز" ? "۰" : ""}</Cell>
          ))}
        </tr>
      </tbody>
    </DataTable>
    <Scrollbar>
      <svg width="6" height="10" viewBox="0 0 6 10"><path d="M0 0l6 5-6 5z" fill="#44587c" /></svg>
      <ScrollThumb>
        <svg width="8" height="7" viewBox="0 0 8 7"><path d="M.5 0v7M3 0v7M5.500 0v7M7.500 0v7" stroke="#5f7ea6" /></svg>
      </ScrollThumb>
      <svg width="6" height="10" viewBox="0 0 6 10"><path d="M6 0 0 5l6 5z" fill="#44587c" /></svg>
    </Scrollbar>
  </GridFrame>
);

const StatementDialog = () => (
  <Dialog role="dialog" aria-label="صورت وضعیت ، آقایان">
    <DialogTitle>
      <DialogControls>
        <PlainButton $w={46} aria-label="بستن">
          <svg width="11" height="11" viewBox="0 0 11 11"><path d="m.5.5 10 10M10.500.5l-10 10" stroke="#000" /></svg>
        </PlainButton>
        <PlainButton $w={46} aria-label="بزرگ">
          <svg width="10" height="10" viewBox="0 0 10 10"><path d="M.5.5h9v9h-9z" fill="none" stroke="#000" /></svg>
        </PlainButton>
        <PlainButton $w={46} aria-label="کوچک">
          <svg width="10" height="1" viewBox="0 0 10 1"><path d="M0 .5h10" stroke="#ccc" /></svg>
        </PlainButton>
      </DialogControls>
      <span>صورت وضعیت ، آقایان</span>
    </DialogTitle>
    <DialogBody onSubmit={(e) => e.preventDefault()}>
      <Panel $grow>
        <Group $pad="4px 0 0">
          <Row $start={72} $after={5}>
            <Label as="span" $w={37}>سال:</Label>
            <YearValue>سال ۱۳۹۵-۱۳۹۶</YearValue>
          </Row>
          <Row $start={35} $after={8}>
            <Label htmlFor="holder" $w={64}>تنخواه گردان :</Label>
            <TextBox id="holder" $w={200} autoFocus />
            <LookupButtons />
          </Row>
          <Row $start={16} $after={4}>
            <Label htmlFor="request" $w={87}>شماره درخواست :</Label>
            <NumberPair $w={97} $soft>
              <NumberPart aria-label="دنباله" readOnly />
              <NumberPart id="request" $narrow defaultValue="95.9" />
            </NumberPair>
            <LookupButtons />
          </Row>
          <FieldSet $margin="0 5px" $pad="3px 0 7px">
            <Legend $inset={9}>صورت وضعیت</Legend>
            <Row $start={12} $end={59} $after={7}>
              <Label htmlFor="statement" $w={102}>شماره صورت وضعیت:</Label>
              <NumberPair $w={104}>
                <NumberPart aria-label="دنباله" readOnly />
                <NumberPart id="statement" $narrow defaultValue="95.9" />
              </NumberPair>
              <LookupButtons />
              <Label htmlFor="date" $w={31} $lead={9}>تاریخ :</Label>
              <DateField id="date" />
              <Label htmlFor="center" $w={56} $lead={9}>مرکز هزینه:</Label>
              <TextBox id="center" $w={85} />
              <TextBox aria-label="نام مرکز هزینه" />
              <LookupButtons />
            </Row>
            <Row $start={12} $end={111} $after={10}>
              <Label htmlFor="note" $w={102}>توضیحات:</Label>
              <TextBox id="note" />
            </Row>
            <Group $margin="0 5px" $pad="5px 0 0">
              <Row $start={11} $end={6} $after={7}>
                <Label htmlFor="cost" $w={64}>عنوان هزینه:</Label>
                <TextBox id="cost" $w={67} />
                <TextBox aria-label="نام هزینه" $w={216} />
                <LookupButtons />
                <TallTools>
                  <IconButton type="button" disabled aria-label="چسباندن"><PasteIcon /></IconButton>
                  <IconButton type="button" aria-label="رونوشت"><CopyIcon /></IconButton>
                </TallTools>
              </Row>
              <Row $start={11} $end={145} $after={8}>
                <Label htmlFor="amount" $w={64} $indent={36}>مبلغ:</Label>
                <TextBox id="amount" $w={93} />
                <Currency aria-label="ارز"><option>ریال</option></Currency>
                <Amount>۰</Amount>
                <Label htmlFor="invoice" $w={68}>شماره فاکتور:</Label>
                <TextBox id="invoice" $w={81} />
                <Label htmlFor="invoiceDate" $w={59} $lead={56}>تاریخ فاکتور:</Label>
                <DateField id="invoiceDate" />
              </Row>
              <Row $start={11} $end={5}>
                <Label htmlFor="costNote" $w={64} $indent={16}>توضیحات:</Label>
                <TextBox id="costNote" />
                <AddButtons>
                  <PushButton type="button" $w={73}><DownArrowIcon />اضافه کردن</PushButton>
                  <PushButton type="button" $w={73} $split><PageIcon />جدید</PushButton>
                </AddButtons>
              </Row>
              <CostTable />
            </Group>
          </FieldSet>
          <SummaryRow>
            <span>مانده کل با در نظر گرفتن همه ی صورت وضعیت ها :</span>
            <PushButton type="button" $w={73} $push>فایل خروجی</PushButton>
          </SummaryRow>
        </Group>
        <FieldSet $h={117} $pad="1px 2px">
          <Legend $inset={8}>جمع پرداخت ها بر اساس ارزها</Legend>
          <GridFrame>
            <DataTable>
              <Columns list={paymentColumns} spare />
              <thead>
                <tr>
                  {paymentColumns.map(([, t], i) => <HeadCell key={i} $last={i === paymentColumns.length - 1}>{t}</HeadCell>)}
                  <BlankHead />
                </tr>
              </thead>
            </DataTable>
          </GridFrame>
        </FieldSet>
      </Panel>
      <Panel>
        <CommandBar>
          <PushButton type="submit" $w={81}><SaveIcon />ذخیره موقت</PushButton>
          <PushButton type="button" $w={91}><SaveIcon badge="ok" />ذخیره و ارسال</PushButton>
          <PushButton type="button" $w={73} $split disabled><SaveIcon badge="x" grey />حذف</PushButton>
          <PushButton type="button" $w={116} disabled>چاپ صورت وضعیت</PushButton>
          <PushButton type="button" $w={73} $split $push><RedX />خروج</PushButton>
        </CommandBar>
      </Panel>
    </DialogBody>
  </Dialog>
);

const tasks = [
  { name: "Start", w: 48, art: <svg width="16" height="16" viewBox="0 0 16 16"><path d="M0 2.300 6.500 1.400v6.200H0zM7.500 1.200 16 0v7.600H7.500zM0 8.500h6.500v6.200L0 13.800zM7.500 8.500H16V16l-8.500-1.200z" fill="#fff" /></svg> },
  { name: "Search", w: 48, art: <svg width="18" height="18" viewBox="0 0 18 18"><circle cx="11" cy="7" r="5" fill="none" stroke="#fff" strokeWidth="1.400" /><path d="M7.500 10.500 1 17" stroke="#fff" strokeWidth="1.600" /></svg> },
  { name: "Task view", w: 48, art: <svg width="20" height="14" viewBox="0 0 20 14"><path d="M4.500.5h11v13h-11zM3 2H.5v10H3M17 2h2.500v10H17" fill="none" stroke="#fff" strokeWidth="1.200" /></svg> },
  { name: "Edge", w: 50, art: <svg width="20" height="21" viewBox="0 0 20 21"><path d="M.3 9Q1.500.4 10.300.3 19.800.5 20 10v2.600H6.600q.4 4.400 5.800 4.500 3.400-.1 6-1.600v4.200q-3 1.300-7 1.300Q2.500 20.500 2.600 13q.2-4.600 4.600-7Q2.500 6.300.3 9Zm6.500.2H14q-.2-3.400-3.600-3.500-3 .2-3.600 3.500Z" fill="#0f7be0" /></svg> },
  { name: "Tools", running: true, art: <svg width="24" height="24" viewBox="0 0 24 24"><rect x="1" y="1" width="7" height="10" rx="1" fill="#e8b42c" /><path d="M2.500 1.500v9" stroke="#fff1a8" strokeWidth="1.500" /><path d="M10 1.500h9v8M1.500 13v7h8" fill="none" stroke="#46a048" strokeDasharray="1 1.500" /><path d="m9 23 9-10M11 13l10 9" stroke="#b9c2ce" strokeWidth="2.600" /><path d="m7 12 4-2 4 2-3 4-2-1zM16 14l2-3 1 2 3 0-1 3-3 1z" fill="#b3c3d8" /></svg> },
  { name: "Explorer", running: true, art: <svg width="22" height="20" viewBox="0 0 22 20"><path d="M0 1h9l2 2h11v15H0z" fill="#f5c84f" /><path d="M1 5h20v13H1z" fill="#ffe394" /><path d="M4 19v-7q0-1 1-1h12q1 0 1 1v7h-3.500v-3h-7v3z" fill="#2fa9e6" /></svg> },
  { name: "Chrome", running: true, art: <svg width="22" height="22" viewBox="0 0 22 22"><path d="M11 11 1.500 5.500A11 11 0 0 1 20.500 5.500H11z" fill="#dd4b3e" /><path d="M11 11 1.500 5.500A11 11 0 0 0 11 22l4.800-8.200z" fill="#1ba261" /><path d="M11 5.500h9.500A11 11 0 0 1 11 22l4.800-8.200z" fill="#ffce44" /><circle cx="11" cy="11" r="5.200" fill="#fff" /><circle cx="11" cy="11" r="4.100" fill="#4a8af4" /></svg> },
  { name: "Visual Studio", running: true, art: <svg width="22" height="22" viewBox="0 0 22 22"><path d="M0 0h22v22H0z" fill="#68217a" /><path d="m15 2 5 2v14l-5 2-8-7-4 3-2-1V7l2-1 4 3zm0 5.500L10.500 11l4.500 3.500zM3.200 9v4l2-2z" fill="#fff" fillRule="evenodd" /></svg> },
  { name: "CuteFTP", running: true, art: <svg width="24" height="24" viewBox="0 0 24 24"><path d="M0 0h24v24H0z" fill="#fff" /><path d="M0 0h24v2H0zM0 22h24v2H0z" fill="#7cc242" /><path d="M2 14Q1 7 9 6q10-1 14 2-12-1-17 5 0 2-1 4Z" fill="#8cc7ea" /><text x="5" y="12" fontFamily="Liberation Sans" fontSize="7" fontStyle="italic" fontWeight="bold" fill="#1f6fb5">Cute</text><text x="5" y="18" fontFamily="Liberation Sans" fontSize="8" fontWeight="bold" fill="#74b83a">FTP</text></svg> },
  { name: "تنخواه", running: true, active: true, art: <svg width="22" height="22" viewBox="0 0 22 22"><path d="M0 0h22v22H0z" fill="#f4f4f2" /><path d="m2 3 3-1-1 3 3 3-4-1zM9 4l2 1-2 3zM13 2l1 3 2-1-1 4-2-2zM18 2l1 5-2 1zM5 12l5 1 4-1 2 1-3 3 2 4-4-3-5-2zM2 19l4 1M17 18l3 2M10 20h2" fill="#191919" stroke="#191919" strokeWidth=".3" /></svg> },
];

const trayIcons = [
  <svg key="up" width="12" height="8" viewBox="0 0 12 8"><path d="m.8 7 5.200-5.500L11.200 7" fill="none" stroke="#fff" strokeWidth="1.300" /></svg>,
  <svg key="bat" width="17" height="12" viewBox="0 0 17 12"><path d="M5 2.500h10v8H5z" fill="none" stroke="#fff" /><path d="M7 4h6v5H7zM15 5h2v3h-2zM0 2h5v3l-1.500 2v4h-1V7L0 5zM1 0h1v2H1zM3 0h1v2H3z" fill="#fff" /></svg>,
  <svg key="vol" width="17" height="14" viewBox="0 0 17 14"><path d="M1 5h2.500L7 1.500v11L3.500 9H1zM9.500 5q1.200 2 0 4M12 3q2.400 4 0 8M14.500 1q3.500 6 0 12" fill="none" stroke="#fff" /></svg>,
  <svg key="net" width="17" height="14" viewBox="0 0 17 14"><path d="M4.500 2.500h11v8H4M10 10.500v3M6 13.500h8M.5.5h4v4h-4zM2.500 4.500v6h2" fill="none" stroke="#fff" /></svg>,
  <svg key="act" width="16" height="16" viewBox="0 0 16 16"><path d="M.5.500h15v11H10l-2 3-2-3H.5zM3 4h10M3 6.500h10M3 9h6" fill="none" stroke="#fff" strokeWidth="1.200" /></svg>,
];

export default function App() {
  return (
    <Screen>
      <Global />
      <TitleBar>
        <QuickAccess><RedX /></QuickAccess>
        <PlainButton $w={20} aria-label="سفارشی">
          <svg width="7" height="6" viewBox="0 0 7 6"><path d="M0 .5h7M.5 2.500h6l-3 3z" stroke="#5b83bb" strokeWidth=".8" fill="#5b83bb" /></svg>
        </PlainButton>
        <AppTitle>تنخواه گردان</AppTitle>
        <WindowControls>
          <PlainButton $w={24} aria-label="بستن"><svg width="10" height="9" viewBox="0 0 10 9"><path d="m1 .5 8 8M9 .5l-8 8" stroke="#7590b8" strokeWidth="2.200" /></svg></PlainButton>
          <PlainButton $w={44} aria-label="اندازه"><svg width="9" height="9" viewBox="0 0 9 9"><path d="M2.500 3V1h6v4h-2M.5 3.500h6v5h-6zM.5 4.500h6" fill="none" stroke="#7590b8" strokeWidth="1.200" /></svg></PlainButton>
          <PlainButton $w={22} aria-label="کوچک"><svg width="7" height="6" viewBox="0 0 7 6"><path d="M0 5h7" stroke="#7590b8" strokeWidth="2" /></svg></PlainButton>
        </WindowControls>
        <Orb aria-label="منو"><OrbIcon /></Orb>
      </TitleBar>
      <TabStrip>
        {ribbonTabs.map((t, i) => <RibbonTab key={t} href="#" $active={i === 2}>{t}</RibbonTab>)}
        <HelpButton $w={16} aria-label="راهنما"><HelpIcon /></HelpButton>
      </TabStrip>
      <Ribbon>
        <RibbonBody>
          <RibbonGroup>
            <RibbonItems>
              {ribbonItems.map((r) => (
                <RibbonItem key={r.text} $w={r.w} $active={r.active}>
                  <RibbonMain>{r.icon}{r.text}</RibbonMain>
                  <RibbonDrop $active={r.active} aria-label="بیشتر"><Caret /></RibbonDrop>
                </RibbonItem>
              ))}
            </RibbonItems>
            <GroupCaption />
          </RibbonGroup>
        </RibbonBody>
      </Ribbon>
      <PageTabs>
        <PageTab href="#" $active><DocumentLinesIcon />میز کار</PageTab>
        <PageTab href="#"><BarsIcon />آمار و نمودار</PageTab>
      </PageTabs>
      <Workspace>
        <Pane>
          <PaneHeader>کارتابل</PaneHeader>
          <PaneBody />
          <PaneFooter>
            <PushButton $w={142} aria-label="وضعیت" />
            <RefreshButton $w={73}>بازخوانی</RefreshButton>
          </PaneFooter>
        </Pane>
        <Pane>
          <PaneHeader />
          <PaneBody>
            <ModuleList>
              {modules.map((m) => (
                <li key={m.kind}>
                  <ModuleLink href="#">
                    <ModuleIcon kind={m.kind} from={m.from} to={m.to} />
                    <span><ModuleTitle $color={m.color}>{m.title}</ModuleTitle>{m.sub}</span>
                  </ModuleLink>
                </li>
              ))}
              <ClubName>باشگاه</ClubName>
            </ModuleList>
            <BackGrid><BackGridHead /><BackGridRow /></BackGrid>
          </PaneBody>
        </Pane>
      </Workspace>
      <StatusBar>
        <StatusCell $w={72}>۱۳۹۵/۱۰/۱۹</StatusCell>
        <StatusCell $w={201}>آخرین ورود: ۱۳۹۵/۱۰/۱۸ ۰۴:۰۳:۴۶ ب.ظ</StatusCell>
        <StatusCell $w={107}>کاربر: <LatinName>General User</LatinName></StatusCell>
        <StatusCell $w={64}>سال:۱۳۹۵</StatusCell>
      </StatusBar>
      <Taskbar>
        {tasks.map((t) => <TaskButton key={t.name} aria-label={t.name} $w={t.w} $running={t.running} $active={t.active}>{t.art}</TaskButton>)}
        <Tray>
          {trayIcons}
          <TrayText $w={26}>فا<br />FA</TrayText>
          <TrayText $w={62}>ق.ظ 09:08<br />۲۰۱۷/۰۱/۰۸</TrayText>
          <ShowDesktop />
        </Tray>
      </Taskbar>
      <StatementDialog />
    </Screen>
  );
}
